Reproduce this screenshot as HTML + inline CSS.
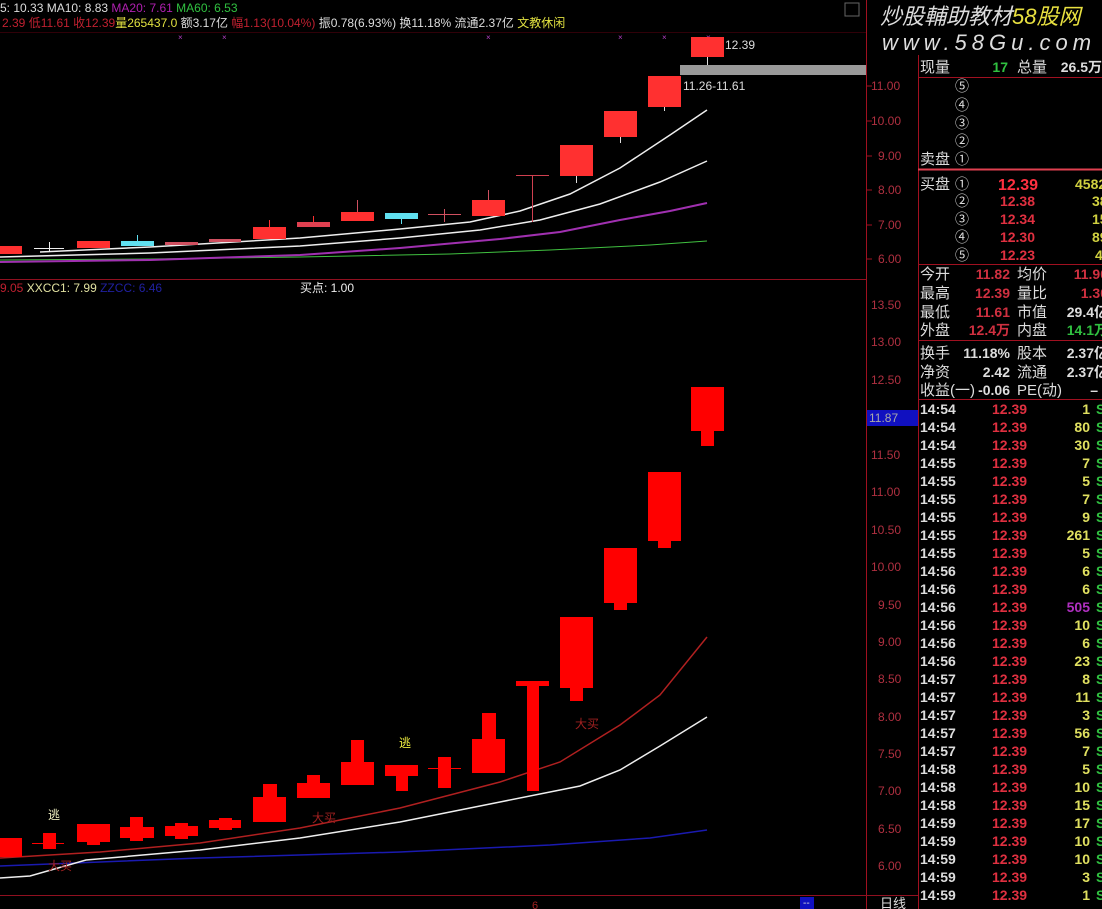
<!DOCTYPE html>
<html><head><meta charset="utf-8"><style>
html,body{margin:0;padding:0;background:#000;width:1102px;height:909px;overflow:hidden}
svg{display:block}
text{font-family:"Liberation Sans","Noto Sans CJK SC",sans-serif}
.ax{fill:#b03040;font-size:12px}
.p{font-size:14px;font-weight:bold}
</style></head><body>
<svg width="1102" height="909" viewBox="0 0 1102 909">
<!-- frame lines -->
<line x1="866.5" y1="0" x2="866.5" y2="909" stroke="#a01020"/>
<line x1="918.5" y1="55" x2="918.5" y2="909" stroke="#a01020"/>
<line x1="0" y1="279.5" x2="866" y2="279.5" stroke="#901020"/>
<line x1="0" y1="895.5" x2="918" y2="895.5" stroke="#901020"/>
<line x1="0" y1="32.5" x2="866" y2="32.5" stroke="#300008"/>
<!-- ticks on axis -->
<g stroke="#a01020">
<line x1="866" y1="86" x2="872" y2="86"/><line x1="866" y1="121" x2="872" y2="121"/><line x1="866" y1="156" x2="872" y2="156"/><line x1="866" y1="190" x2="872" y2="190"/><line x1="866" y1="225" x2="872" y2="225"/><line x1="866" y1="259" x2="872" y2="259"/>
</g>
<rect x="845" y="3" width="14" height="13" fill="none" stroke="#666"/>
<!-- header text -->
<text x="0" y="12" font-size="12"><tspan fill="#ddd">5: 10.33 MA10: 8.83 </tspan><tspan fill="#b020b0">MA20: 7.61 </tspan><tspan fill="#30c040">MA60: 6.53</tspan></text>
<text x="2" y="27" font-size="12"><tspan fill="#c02030">2.39 低11.61 收12.39</tspan><tspan fill="#e0e040">量265437.0</tspan><tspan fill="#ddd"> 额3.17亿 </tspan><tspan fill="#c02030">幅1.13(10.04%) </tspan><tspan fill="#ddd">振0.78(6.93%) 换11.18% 流通2.37亿 </tspan><tspan fill="#e0e040">文教休闲</tspan></text>
<g fill="#b040c0" font-size="8"><text x="178" y="40">×</text><text x="222" y="40">×</text><text x="486" y="40">×</text><text x="618" y="40">×</text><text x="662" y="40">×</text><text x="706" y="40">×</text></g>
<!-- upper MA lines -->
<polyline fill="none" stroke="#40c040" stroke-width="1" points="0,260 150,259 300,257 450,254 550,250 650,245 707,241"/>
<polyline fill="none" stroke="#a030b0" stroke-width="2" points="0,262 150,260 300,255 400,248 500,239 560,232 620,220 670,211 707,203"/>
<polyline fill="none" stroke="#eee" stroke-width="1.5" points="0,257 150,253 300,246 400,238 480,230 540,220 600,204 660,182 707,161"/>
<polyline fill="none" stroke="#eee" stroke-width="1.5" points="40,252 150,247 300,238 400,229 470,222 520,211 570,194 620,168 670,135 707,110"/>
<!-- upper candles -->
<g fill="#ff3030">
<rect x="0" y="246" width="22" height="8"/>
<rect x="77" y="241" width="33" height="7"/>
<rect x="165" y="242" width="33" height="3" fill="#d05060"/>
<rect x="209" y="239" width="32" height="3" fill="#d05060"/>
<rect x="253" y="227" width="33" height="12"/><rect x="269" y="220" width="1" height="7"/>
<rect x="297" y="222" width="33" height="5" fill="#e04050"/><rect x="313" y="216" width="1" height="6"/>
<rect x="341" y="212" width="33" height="9"/><rect x="357" y="200" width="1" height="12" fill="#d05060"/>
<rect x="428" y="214" width="33" height="1" fill="#d05060"/><rect x="444" y="209" width="1" height="13" fill="#d05060"/>
<rect x="472" y="200" width="33" height="16"/><rect x="488" y="190" width="1" height="10" fill="#d05060"/>
<rect x="516" y="175" width="33" height="1" fill="#d04050"/><rect x="532" y="175" width="1" height="47" fill="#d04050"/>
<rect x="560" y="145" width="33" height="31"/><rect x="576" y="176" width="1" height="7" fill="#ddd"/>
<rect x="604" y="111" width="33" height="26"/><rect x="620" y="137" width="1" height="6" fill="#ddd"/>
<rect x="648" y="76" width="33" height="31"/><rect x="664" y="107" width="1" height="4" fill="#ddd"/>
<rect x="691" y="37" width="33" height="20"/><rect x="707" y="57" width="1" height="8" fill="#ddd"/>
</g>
<g fill="#60e0f0"><rect x="121" y="241" width="33" height="5"/><rect x="137" y="235" width="1" height="6"/><rect x="385" y="213" width="33" height="6"/><rect x="401" y="219" width="1" height="5"/></g>
<rect x="34" y="248" width="30" height="1" fill="#eee"/><rect x="49" y="242" width="1" height="10" fill="#eee"/>
<rect x="680" y="65" width="186" height="10" fill="#999"/>
<text x="725" y="49" fill="#ddd" font-size="12">12.39</text>
<text x="683" y="90" fill="#ddd" font-size="12">11.26-11.61</text>
<!-- upper axis labels -->
<g class="ax"><text x="871" y="90">11.00</text><text x="871" y="125">10.00</text><text x="878" y="160">9.00</text><text x="878" y="194">8.00</text><text x="878" y="229">7.00</text><text x="878" y="263">6.00</text></g>
<!-- lower header -->
<text x="0" y="292" font-size="12"><tspan fill="#c02030">9.05 </tspan><tspan fill="#e0e0a0">XXCC1: 7.99 </tspan><tspan fill="#2020a0">ZZCC: 6.46</tspan></text>
<text x="300" y="292" font-size="12" fill="#eee">买点: 1.00</text>
<!-- lower axis labels -->
<g class="ax"><text x="871" y="309">13.50</text><text x="871" y="346">13.00</text><text x="871" y="384">12.50</text><text x="871" y="459">11.50</text><text x="871" y="496">11.00</text><text x="871" y="534">10.50</text><text x="871" y="571">10.00</text><text x="878" y="609">9.50</text><text x="878" y="646">9.00</text><text x="878" y="683">8.50</text><text x="878" y="721">8.00</text><text x="878" y="758">7.50</text><text x="878" y="795">7.00</text><text x="878" y="833">6.50</text><text x="878" y="870">6.00</text></g>
<rect x="867" y="410" width="51" height="16" fill="#1010c0"/>
<text x="869" y="422" fill="#aaa" font-size="12">11.87</text>
<!-- lower lines -->
<polyline fill="none" stroke="#1a1ab0" stroke-width="1.5" points="0,866 200,858 400,852 550,845 650,838 707,830"/>
<polyline fill="none" stroke="#b02020" stroke-width="1.5" points="0,858 100,852 200,843 300,828 400,808 500,782 560,762 620,725 660,695 707,637"/>
<polyline fill="none" stroke="#eee" stroke-width="1.5" points="0,878 30,876 86,860 200,850 300,838 400,822 500,802 580,786 620,770 660,746 707,717"/>
<!-- lower candles -->
<g fill="#f00">
<rect x="0" y="838" width="22" height="19"/>
<rect x="43" y="833" width="13" height="16"/><rect x="32" y="843" width="32" height="1"/>
<rect x="77" y="824" width="33" height="18"/><rect x="87" y="842" width="13" height="3"/>
<rect x="120" y="827" width="34" height="11"/><rect x="130" y="817" width="13" height="24"/>
<rect x="165" y="826" width="33" height="10"/><rect x="175" y="823" width="13" height="16"/>
<rect x="209" y="820" width="32" height="8"/><rect x="219" y="818" width="13" height="12"/>
<rect x="253" y="797" width="33" height="25"/><rect x="263" y="784" width="14" height="13"/>
<rect x="297" y="783" width="33" height="15"/><rect x="307" y="775" width="13" height="8"/>
<rect x="341" y="762" width="33" height="23"/><rect x="351" y="740" width="13" height="22"/>
<rect x="385" y="765" width="33" height="11"/><rect x="396" y="776" width="12" height="15"/>
<rect x="428" y="768" width="33" height="1"/><rect x="438" y="757" width="13" height="31"/>
<rect x="472" y="739" width="33" height="34"/><rect x="482" y="713" width="14" height="26"/>
<rect x="516" y="681" width="33" height="5"/><rect x="527" y="686" width="12" height="105"/>
<rect x="560" y="617" width="33" height="71"/><rect x="570" y="688" width="13" height="13"/>
<rect x="604" y="548" width="33" height="55"/><rect x="614" y="603" width="13" height="7"/>
<rect x="648" y="472" width="33" height="69"/><rect x="658" y="541" width="13" height="7"/>
<rect x="691" y="387" width="33" height="44"/><rect x="701" y="431" width="13" height="15"/>
</g>
<g font-size="12"><text x="48" y="819" fill="#f0f0c0">逃</text><text x="399" y="747" fill="#f0f040">逃</text>
<text x="48" y="870" fill="#a02020">大买</text><text x="312" y="822" fill="#a02020">大买</text><text x="575" y="728" fill="#a02020">大买</text></g>
<text x="532" y="909" fill="#a02020" font-size="11">6</text>
<rect x="800" y="897" width="14" height="12" fill="#1010c0"/><text x="803" y="906" fill="#ddd" font-size="10">--</text>
<text x="880" y="908" fill="#ddd" font-size="13">日线</text>
<!-- watermark -->
<text x="880" y="24" font-size="22" font-style="italic" fill="#ddd">炒股輔助教材<tspan fill="#e8e040">58股网</tspan></text>
<text x="882" y="50" font-size="22" font-style="italic" fill="#ddd" letter-spacing="5">www.58Gu.com</text>
<!-- right panel -->
<g stroke="#a01020"><line x1="918" y1="77.5" x2="1102" y2="77.5"/><line x1="918" y1="169.5" x2="1102" y2="169.5" stroke="#e04050" stroke-width="2"/><line x1="918" y1="264.5" x2="1102" y2="264.5"/><line x1="918" y1="340.5" x2="1102" y2="340.5"/><line x1="918" y1="399.5" x2="1102" y2="399.5"/></g>
<g font-size="15" fill="#ddd">
<text x="920" y="72">现量</text><text x="1017" y="72">总量</text>
<text x="920" y="164">卖盘</text><text x="920" y="189">买盘</text>
<text x="920" y="279">今开</text><text x="1017" y="279">均价</text>
<text x="920" y="298">最高</text><text x="1017" y="298">量比</text>
<text x="920" y="317">最低</text><text x="1017" y="317">市值</text>
<text x="920" y="335">外盘</text><text x="1017" y="335">内盘</text>
<text x="920" y="358">换手</text><text x="1017" y="358">股本</text>
<text x="920" y="377">净资</text><text x="1017" y="377">流通</text>
<text x="920" y="395">收益(一)</text><text x="1017" y="395">PE(动)</text>
</g>
<g font-size="14" fill="#ddd"><text x="955" y="91">⑤</text><text x="955" y="110">④</text><text x="955" y="128">③</text><text x="955" y="146">②</text><text x="955" y="164">①</text>
<text x="955" y="189">①</text><text x="955" y="206">②</text><text x="955" y="224">③</text><text x="955" y="242">④</text><text x="955" y="260">⑤</text></g>
<g class="p">
<text x="1008" y="72" fill="#30c040" text-anchor="end">17</text><text x="1102" y="72" fill="#ddd" text-anchor="end">26.5万</text>
<text x="1038" y="190" fill="#ff3040" font-size="16" text-anchor="end">12.39</text>
<text x="1035" y="206" fill="#e03040" text-anchor="end">12.38</text><text x="1035" y="224" fill="#e03040" text-anchor="end">12.34</text><text x="1035" y="242" fill="#e03040" text-anchor="end">12.30</text><text x="1035" y="260" fill="#e03040" text-anchor="end">12.23</text>
<g fill="#d0d040"><text x="1075" y="189">4582</text><text x="1092" y="206">38</text><text x="1092" y="224">15</text><text x="1092" y="242">89</text><text x="1095" y="260">4</text></g>
<g fill="#d03040" text-anchor="end"><text x="1010" y="279">11.82</text><text x="1010" y="298">12.39</text><text x="1010" y="317">11.61</text><text x="1010" y="335">12.4万</text><text x="1108" y="279">11.90</text><text x="1108" y="298">1.30</text></g>
<text x="1108" y="317" fill="#ddd" text-anchor="end">29.4亿</text><text x="1108" y="335" fill="#30c040" text-anchor="end">14.1万</text>
<g fill="#ddd" text-anchor="end"><text x="1010" y="358">11.18%</text><text x="1010" y="377">2.42</text><text x="1010" y="395">-0.06</text><text x="1108" y="358">2.37亿</text><text x="1108" y="377">2.37亿</text><text x="1098" y="395">–</text></g>
</g>
<g class="p">
<g fill="#ddd">
<text x="920" y="414">14:54</text><text x="920" y="432">14:54</text><text x="920" y="450">14:54</text><text x="920" y="468">14:55</text><text x="920" y="486">14:55</text><text x="920" y="504">14:55</text><text x="920" y="522">14:55</text><text x="920" y="540">14:55</text><text x="920" y="558">14:55</text><text x="920" y="576">14:56</text><text x="920" y="594">14:56</text><text x="920" y="612">14:56</text><text x="920" y="630">14:56</text><text x="920" y="648">14:56</text><text x="920" y="666">14:56</text><text x="920" y="684">14:57</text><text x="920" y="702">14:57</text><text x="920" y="720">14:57</text><text x="920" y="738">14:57</text><text x="920" y="756">14:57</text><text x="920" y="774">14:58</text><text x="920" y="792">14:58</text><text x="920" y="810">14:58</text><text x="920" y="828">14:59</text><text x="920" y="846">14:59</text><text x="920" y="864">14:59</text><text x="920" y="882">14:59</text><text x="920" y="900">14:59</text>
</g>
<g fill="#e03040">
<text x="992" y="414">12.39</text><text x="992" y="432">12.39</text><text x="992" y="450">12.39</text><text x="992" y="468">12.39</text><text x="992" y="486">12.39</text><text x="992" y="504">12.39</text><text x="992" y="522">12.39</text><text x="992" y="540">12.39</text><text x="992" y="558">12.39</text><text x="992" y="576">12.39</text><text x="992" y="594">12.39</text><text x="992" y="612">12.39</text><text x="992" y="630">12.39</text><text x="992" y="648">12.39</text><text x="992" y="666">12.39</text><text x="992" y="684">12.39</text><text x="992" y="702">12.39</text><text x="992" y="720">12.39</text><text x="992" y="738">12.39</text><text x="992" y="756">12.39</text><text x="992" y="774">12.39</text><text x="992" y="792">12.39</text><text x="992" y="810">12.39</text><text x="992" y="828">12.39</text><text x="992" y="846">12.39</text><text x="992" y="864">12.39</text><text x="992" y="882">12.39</text><text x="992" y="900">12.39</text>
</g>
<g fill="#e0e060" text-anchor="end">
<text x="1090" y="414">1</text><text x="1090" y="432">80</text><text x="1090" y="450">30</text><text x="1090" y="468">7</text><text x="1090" y="486">5</text><text x="1090" y="504">7</text><text x="1090" y="522">9</text><text x="1090" y="540">261</text><text x="1090" y="558">5</text><text x="1090" y="576">6</text><text x="1090" y="594">6</text><text x="1090" y="612" fill="#b030c0">505</text><text x="1090" y="630">10</text><text x="1090" y="648">6</text><text x="1090" y="666">23</text><text x="1090" y="684">8</text><text x="1090" y="702">11</text><text x="1090" y="720">3</text><text x="1090" y="738">56</text><text x="1090" y="756">7</text><text x="1090" y="774">5</text><text x="1090" y="792">10</text><text x="1090" y="810">15</text><text x="1090" y="828">17</text><text x="1090" y="846">10</text><text x="1090" y="864">10</text><text x="1090" y="882">3</text><text x="1090" y="900">1</text>
</g>
<g fill="#30c040"><text x="1096" y="414">S</text><text x="1096" y="432">S</text><text x="1096" y="450">S</text><text x="1096" y="468">S</text><text x="1096" y="486">S</text><text x="1096" y="504">S</text><text x="1096" y="522">S</text><text x="1096" y="540">S</text><text x="1096" y="558">S</text><text x="1096" y="576">S</text><text x="1096" y="594">S</text><text x="1096" y="612">S</text><text x="1096" y="630">S</text><text x="1096" y="648">S</text><text x="1096" y="666">S</text><text x="1096" y="684">S</text><text x="1096" y="702">S</text><text x="1096" y="720">S</text><text x="1096" y="738">S</text><text x="1096" y="756">S</text><text x="1096" y="774">S</text><text x="1096" y="792">S</text><text x="1096" y="810">S</text><text x="1096" y="828">S</text><text x="1096" y="846">S</text><text x="1096" y="864">S</text><text x="1096" y="882">S</text><text x="1096" y="900">S</text></g>
</g>
</svg>
</body></html>
